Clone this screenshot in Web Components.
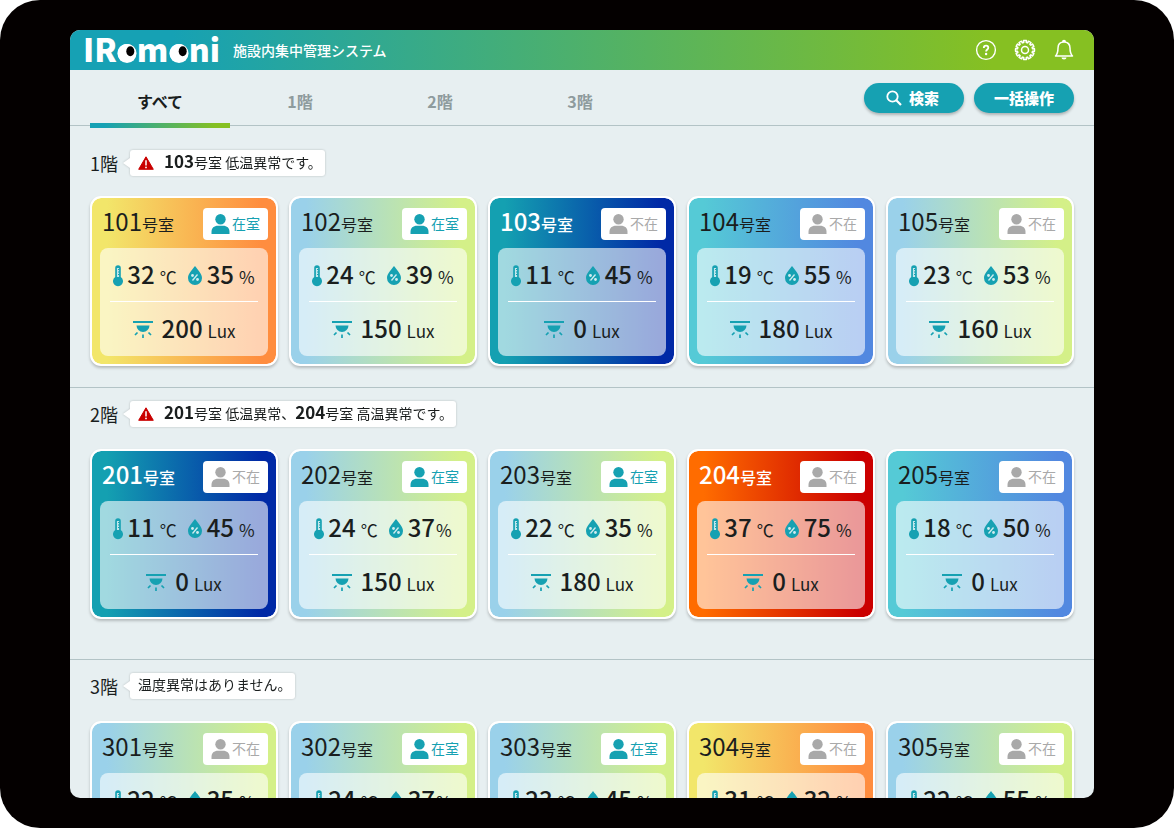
<!DOCTYPE html>
<html lang="ja">
<head>
<meta charset="utf-8">
<title>IRomoni</title>
<style>
html { height: 100%; background: #fff; }
body { margin: 0; height: 100%; font-family: "Noto Sans CJK JP", "Noto Sans", sans-serif; color: #1a1e1e; }
</style>
</head>
<body>
<tablet-frame>
  <app-header>施設内集中管理システム</app-header>
  <tab-bar></tab-bar>
  <floor-section first floor="1">
    <floor-alert slot="alert" warn><b>103</b>号室 低温異常です。</floor-alert>
    <room-card room="101" state="warm" temp="32" hum="35" lux="200" present></room-card>
    <room-card room="102" state="mild" temp="24" hum="39" lux="150" present></room-card>
    <room-card room="103" state="cold" temp="11" hum="45" lux="0"></room-card>
    <room-card room="104" state="cool" temp="19" hum="55" lux="180"></room-card>
    <room-card room="105" state="mild" temp="23" hum="53" lux="160"></room-card>
  </floor-section>
  <floor-section floor="2">
    <floor-alert slot="alert" warn><b>201</b>号室 低温異常、<b>204</b>号室 高温異常です。</floor-alert>
    <room-card room="201" state="cold" temp="11" hum="45" lux="0"></room-card>
    <room-card room="202" state="mild" temp="24" hum="37" lux="150" present tight></room-card>
    <room-card room="203" state="mild" temp="22" hum="35" lux="180" present></room-card>
    <room-card room="204" state="hot" temp="37" hum="75" lux="0"></room-card>
    <room-card room="205" state="cool" temp="18" hum="50" lux="0"></room-card>
  </floor-section>
  <floor-section floor="3">
    <floor-alert slot="alert">温度異常はありません。</floor-alert>
    <room-card room="301" state="mild" temp="22" hum="35" lux="150"></room-card>
    <room-card room="302" state="mild" temp="24" hum="37" lux="150" present tight></room-card>
    <room-card room="303" state="mild" temp="23" hum="45" lux="180" present></room-card>
    <room-card room="304" state="warm" temp="31" hum="32" lux="0"></room-card>
    <room-card room="305" state="mild" temp="22" hum="55" lux="0"></room-card>
  </floor-section>
</tablet-frame>
<script>
const define = (name, render) => customElements.define(name, class extends HTMLElement {
  connectedCallback() {
    if (!this.shadowRoot) this.attachShadow({ mode: "open" }).innerHTML = render(this);
  }
});

define("tablet-frame", () => `
<style>
:host { display: block; box-sizing: border-box; height: 100vh; padding: 30px 80px 30px 70px; background: #040000; border-radius: 40px; }
main { height: 100%; overflow: hidden; border-radius: 10px; background: #e7eff1; }
</style>
<main><slot></slot></main>`);

define("app-header", () => `
<style>
:host { display: flex; align-items: center; height: 40px; padding: 0 19px 0 10px; color: #fff;
  background: linear-gradient(90deg, #16a1b4 10%, #86c022 90%); }
h1 { margin: 0 0 0 12px; font-size: 14px; line-height: 20px; font-weight: 500; flex: 1; }
.logo { display: block; width: 141px; height: 40px; overflow: visible; }
nav { display: flex; gap: 17px; }
button { all: unset; display: block; cursor: pointer; width: 22px; height: 22px; }
button svg { display: block; }
</style>
<svg class="logo" viewBox="0 0 141 40" role="img" aria-label="IRomoni">
  <text x="3" y="32" font-family="Noto Sans CJK JP" font-weight="900" font-size="32" fill="#fff">IRomoni</text>
  <circle cx="47" cy="23.500" r="9.500" fill="#fff"/><circle cx="99" cy="23.500" r="9.500" fill="#fff"/>
  <ellipse cx="50.300" cy="21.300" rx="4" ry="5" fill="#040000"/><ellipse cx="102.700" cy="21.300" rx="4" ry="5" fill="#040000"/>
</svg>
<h1><slot></slot></h1>
<nav>
  <button aria-label="ヘルプ"><svg width="22" height="22" viewBox="0 0 22 22" fill="none" stroke="#fff"><circle cx="11" cy="11" r="9.400" stroke-width="1.400"/><path d="M8.800 9c0-1.500 1-2.300 2.300-2.300s2.200.9 2.200 2.100c0 1.700-2.200 1.800-2.200 3.700" stroke-width="1.800"/><circle cx="11.100" cy="15" r="1.200" fill="#fff" stroke="none"/></svg></button>
  <button aria-label="設定"><svg width="22" height="22" viewBox="0 0 22 22" fill="none" stroke="#fff" stroke-width="1.500" stroke-linejoin="round"><circle cx="11" cy="11" r="3.500"/><path id="g"/></svg></button>
  <button aria-label="通知"><svg width="22" height="22" viewBox="0 0 22 22" fill="none" stroke="#fff" stroke-width="1.500" stroke-linejoin="round"><path d="M2.500 17h17c-2-2-2.500-4-2.500-8 0-3.600-2.300-6-6-6S5 5.400 5 9c0 4-.5 6-2.500 8zM9.700 3c0-2 2.600-2 2.600 0"/><path d="M8.500 18.500a2.500 2 0 0 0 5 0z" fill="#fff" stroke="none"/></svg></button>
</nav>`);

/* Scalloped rim of the settings gear: twelve rounded teeth. */
{
  const path = document.querySelector("app-header").shadowRoot.querySelector("#g");
  const n = 12, at = (r, a) => (11 + r * Math.cos(a)).toFixed(2) + " " + (11 + r * Math.sin(a)).toFixed(2);
  let d = "";
  for (let i = 0; i < n; i++) {
    const a = i * 2 * Math.PI / n;
    d += (i ? "L" : "M") + at(7.6, a - .17) + "L" + at(9.5, a - .15) + "A9.500 9.500 0 0 1 " + at(9.5, a + .15) + "L" + at(7.6, a + .17);
  }
  path.setAttribute("d", d + "Z");
}

define("tab-bar", () => `
<style>
:host { display: flex; justify-content: space-between; height: 55px; padding: 0 20px; border-bottom: 1px solid #b3c3c6; }
nav { display: flex; }
a { box-sizing: border-box; width: 140px; height: 58px; padding-top: 19px; text-align: center; font-size: 16px; line-height: 24px;
  font-weight: 700; color: #8e9b9d; text-decoration: none; }
a[aria-current] { color: #1a1e1e; background: linear-gradient(90deg, #16a1b4 10%, #86c022 90%) bottom / 100% 5px no-repeat; }
.actions { display: flex; gap: 10px; padding-top: 13px; }
button { display: flex; align-items: center; justify-content: center; gap: 7px; width: 100px; height: 30px; padding: 0 3px 1px 0; border: 0;
  border-radius: 15px; background: #16a1b2; color: #fff; font: 900 15px/21px "Noto Sans CJK JP", sans-serif;
  box-shadow: 0 2px 3px rgba(0,0,0,.25); }
button:last-child { padding-right: 0; }
</style>
<nav><a href="#all" aria-current="page">すべて</a><a href="#f1">1階</a><a href="#f2">2階</a><a href="#f3">3階</a></nav>
<div class="actions">
  <button><svg width="16" height="16" viewBox="0 0 16 16" fill="none" stroke="#fff"><circle cx="6.500" cy="6.500" r="5.200" stroke-width="1.800"/><path d="M10.300 10.300 15 15" stroke-width="2.200"/></svg>検索</button>
  <button>一括操作</button>
</div>`);

define("floor-section", el => `
<style>
:host { display: block; box-sizing: border-box; min-height: 272px; padding: 13px 20px 20px; border-top: 1px solid #b3c3c6; }
:host([first]) { min-height: 0; padding-top: 24px; padding-bottom: 21px; border: 0; }
header { display: flex; align-items: center; gap: 12px; height: 26px; margin-bottom: 22px; }
:host([first]) header { margin-bottom: 20px; }
h2 { margin: 0; font-size: 18px; line-height: 26px; font-weight: 400; }
.rooms { display: grid; grid-template-columns: repeat(5, 1fr); gap: 11px; }
</style>
<header><h2>${el.getAttribute("floor")}階</h2><slot name="alert"></slot></header>
<div class="rooms"><slot></slot></div>`);

define("floor-alert", el => `
<style>
:host { display: flex; align-items: center; gap: 10px; position: relative; height: 26px; padding: 0 3px 0 8px; border-radius: 3px;
  background: #fff; font-size: 14px; line-height: 23px; font-weight: 400; filter: drop-shadow(0 0 1px rgba(0,0,0,.2)); }
:host::before { content: ""; position: absolute; right: 100%; top: 8px; border: 5px solid transparent; border-right: 7px solid #fff; border-left: 0; }
::slotted(b) { font-size: 17px; line-height: 23px; }
span { padding-bottom: 3px; }
</style>
${el.hasAttribute("warn") ? `<svg width="16" height="14" viewBox="0 0 16 14"><path d="M8 .8 15.300 13.300H.7z" fill="#c90000" stroke="#c90000" stroke-linejoin="round"/><path d="M8 4.200v5.200" stroke="#fff" stroke-width="1.500"/><circle cx="8" cy="11.400" r=".9" fill="#fff"/></svg>` : ""}
<span><slot></slot></span>`);

define("room-card", el => {
  const v = n => el.getAttribute(n);
  const here = el.hasAttribute("present");
  return `
<style>
:host { --from: #9ad1ea; --to: #d4f088; --title: #1a1e1e; --weight: 400; display: block; box-sizing: border-box; height: 170px; padding: 10px 8px 8px;
  border: 2px solid #fff; border-radius: 11px; background: linear-gradient(90deg, var(--from) 8%, var(--to) 92%) padding-box, #fff;
  box-shadow: 0 2px 3px rgba(0,0,0,.22); }
:host([state=warm]) { --from: #f2e66a; --to: #ff8d3f; }
:host([state=cold]) { --from: #14a0b1; --to: #0029a6; --title: #fff; --weight: 500; }
:host([state=cool]) { --from: #55cad6; --to: #5288e0; }
:host([state=hot]) { --from: #ff6c00; --to: #cb0000; --title: #fff; --weight: 500; }
header { display: flex; align-items: center; justify-content: space-between; height: 32px; margin-bottom: 8px; padding-left: 2px; }
h3 { margin: 0; padding-bottom: 3px; font-size: 16px; line-height: 32px; font-weight: var(--weight); color: var(--title); white-space: nowrap; }
h3 b { font-size: 24px; font-weight: var(--weight); }
.badge { box-sizing: border-box; display: flex; align-items: center; justify-content: center; gap: 2px; width: 65px; height: 32px; border-radius: 4px;
  background: #fff; color: ${here ? "#16a1b2" : "#a9a9a9"}; font-size: 14px; line-height: 20px; }
.badge span { padding-bottom: 2px; }
.panel { height: 108px; border-radius: 8px; background: rgba(255,255,255,.6); padding: 0 10px; }
.row { box-sizing: border-box; display: flex; align-items: center; justify-content: center; height: 53px; padding-top: 2px;
  font-size: 17px; line-height: 32px; color: #1a1e1e; }
.row + .row { border-top: 1px solid #fff; height: 55px; padding-top: 0; }
svg { flex: none; }
b { font-size: 24px; font-weight: 500; }
.val { white-space: nowrap; }
.t { margin: 0 11px 0 4px; }
.h { margin-left: 5px; }
.l { margin-left: 9px; }
.val b { margin-right: 5px; }
:host([tight]) .h b { margin-right: 1px; }
</style>
<header><h3><b>${v("room")}</b>号室</h3>
<div class="badge"><svg width="19" height="20" viewBox="0 0 19 20" fill="currentColor"><circle cx="9.500" cy="5.200" r="5.200"/><path d="M0.500 20v-2c0-4 2.500-6.200 6.500-6.200h5c4 0 6.500 2.200 6.500 6.200v2z"/></svg><span>${here ? "在室" : "不在"}</span></div></header>
<div class="panel">
  <div class="row">
    <svg width="10" height="22" viewBox="0 0 10 22"><path d="M2.200 12V3a2.800 2.800 0 0 1 5.600 0v9a5 5 0 1 1-5.600 0z" fill="#16a1b2"/><path d="M5 3v9" stroke="#fff" stroke-opacity=".75" stroke-width="2.200"/><path d="M5 4.500h1.500M5 7h1.500M5 9.500h1.500" stroke="#16a1b2"/></svg>
    <span class="val t"><b>${v("temp")}</b>℃</span>
    <svg width="14" height="19" viewBox="0 0 14 19"><path d="M7 0c2.500 3.500 7 7.500 7 12a7 7 0 0 1-14 0C0 7.500 4.500 3.500 7 0z" fill="#16a1b2"/><path d="m4.500 14.500 5-6" stroke="#fff" stroke-opacity=".8" stroke-width="1.300"/><circle cx="4.500" cy="9.500" r="1.400" fill="#fff" fill-opacity=".8"/><circle cx="9.500" cy="13.500" r="1.400" fill="#fff" fill-opacity=".8"/></svg>
    <span class="val h"><b>${v("hum")}</b>%</span>
  </div>
  <div class="row">
    <svg width="20" height="17" viewBox="0 0 20 17" fill="none" stroke="#16a1b2"><path d="M0 1h20" stroke-width="2"/><path d="M3.500 4.500h13a6.500 6.500 0 0 1-13 0z" fill="#16a1b2" stroke="none"/><path d="M10 13.500V17M4.500 11.500 2 14M15.500 11.500 18 14" stroke-width="1.700"/></svg>
    <span class="val l"><b>${v("lux")}</b>Lux</span>
  </div>
</div>`;
});
</script>
</body>
</html>
